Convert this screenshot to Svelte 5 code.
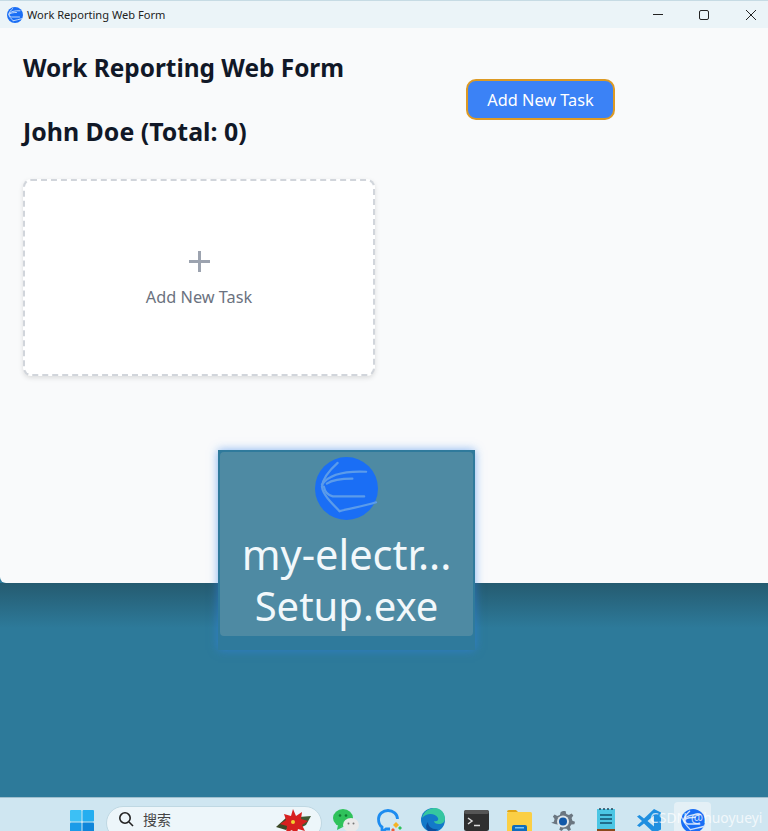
<script>
	let tasks = $state([]);
	const owner = "John Doe";
</script>

{#snippet appLogo(size, line = "#5b9bea")}
	<svg width={size} height={size} viewBox="0 0 64 64">
		<circle cx="32" cy="32" r="32" fill="#1a6ef5" />
		<g fill="none" stroke={line} stroke-width={size < 30 ? 3.6 : 2.2} stroke-linecap="round">
			<path d="M23 6C14 14 8 22 7 30 8 38 16 46 25 55" />
			<path d="M7 28C14 18 30 14 52 15" />
			<path d="M12 27C18 23 28 22 38 22" />
			<path d="M9 30C10 36 14 39 18 40L50 40" />
			<path d="M25 55C36 52 50 50 62 46" />
		</g>
	</svg>
{/snippet}

<div class="desktop">
	<section class="window">
		<header class="titlebar">
			<div class="title">
				{@render appLogo(16, "#cfe2fb")}
				<span>Work Reporting Web Form</span>
			</div>
			<div class="controls">
				<svg width="46" height="28" viewBox="0 0 46 28"><path d="M17 13.5h10" stroke="#222" fill="none" /></svg>
				<svg width="46" height="28" viewBox="0 0 46 28"><rect x="17.5" y="9.5" width="9" height="9" rx="1.5" stroke="#222" fill="none" /></svg>
				<svg width="46" height="28" viewBox="0 0 46 28"><path d="M18 9l10 10M28 9l-10 10" stroke="#222" fill="none" /></svg>
			</div>
		</header>
		<main class="content">
			<div class="head">
				<h1>Work Reporting Web Form</h1>
				<button class="add-btn">Add New Task</button>
			</div>
			<h2>{owner} (Total: {tasks.length})</h2>
			<div class="card">
				<span class="plus"></span>
				<span class="card-label">Add New Task</span>
			</div>
		</main>
	</section>

	<div class="wallpaper"></div>

	<footer class="taskbar">
		<svg class="tb win" width="24" height="24" viewBox="0 0 24 24">
			<rect x="0" y="0" width="11.5" height="11.5" rx="1" fill="#3cc0f5" />
			<rect x="12.5" y="0" width="11.5" height="11.5" rx="1" fill="#25aef0" />
			<rect x="0" y="12.5" width="11.5" height="11.5" rx="1" fill="#1a9be8" />
			<rect x="12.5" y="12.5" width="11.5" height="11.5" rx="1" fill="#0f86da" />
		</svg>
		<div class="search">
			<svg width="16" height="16" viewBox="0 0 16 16" fill="none" stroke="#222" stroke-width="1.6"><circle cx="7" cy="7" r="5.2" /><path d="M11 11l4 4" /></svg>
			<span>搜索</span>
			<svg class="flower" width="36" height="30" viewBox="0 0 36 30">
				<path d="M0 19L11 9l6 7-7 6z" fill="#3c4a26" />
				<path d="M35 8L23 9l1 11 6-3z" fill="#3e5a34" />
				<path d="M17 1l3 7 6-4-1 7 7 2-6 4 3 6-7-2-2 7-4-6-6 3 1-7-7-2 6-4-2-6 7 2z" fill="#d7201f" />
				<circle cx="17" cy="14" r="2" fill="#f2cf30" />
			</svg>
		</div>
		<svg class="tb" width="26" height="24" viewBox="0 0 26 24">
			<ellipse cx="10" cy="10" rx="10" ry="9" fill="#2fc25b" />
			<path d="M5 17l-1 5 6-3z" fill="#2fc25b" />
			<ellipse cx="18" cy="17" rx="8" ry="7" fill="#e9e9e9" />
			<circle cx="15.500" cy="15.500" r="1" fill="#777" /><circle cx="20.500" cy="15.500" r="1" fill="#777" />
			<circle cx="7" cy="7.500" r="1.300" fill="#0f7a32" /><circle cx="13" cy="7.500" r="1.300" fill="#0f7a32" />
		</svg>
		<svg class="tb" width="26" height="26" viewBox="0 0 26 26" fill="none">
			<path d="M13 21H9l-4 3v-5C2 17 1.500 14 1.500 11 1.500 6 6 2.500 11 2.500S20.500 6 20.500 11" stroke="#1d8cf0" stroke-width="2.800" />
			<path d="M19 14l3 3-3 3-3-3z" fill="#f5b324" /><path d="M23 18l2 2-2 2-2-2z" fill="#2fc25b" /><path d="M16 20l2 2-2 2-2-2z" fill="#ee5a3c" />
		</svg>
		<svg class="tb" width="24" height="24" viewBox="0 0 24 24">
			<circle cx="12" cy="12" r="12" fill="#1379c9" />
			<path d="M1 10C3 2 10 0 14 0c6 0 10 5 10 11 0 3-3 5-6 5-3 0-5-1-5-3 3 1 5-1 4-3C15 6 9 5 5 7 3 8 2 9 1 10z" fill="#35c6a0" />
			<path d="M7 14c0 5 5 8 10 7-1 1-3 3-6 3-5 0-8-5-4-10z" fill="#0c4f9e" />
		</svg>
		<svg class="tb" width="25" height="21" viewBox="0 0 25 21">
			<rect width="25" height="21" rx="2.500" fill="#2f2f2f" />
			<rect width="25" height="4" rx="2" fill="#555" />
			<path d="M4 8l4 3-4 3" stroke="#ddd" stroke-width="1.500" fill="none" />
			<path d="M10 15.500h6" stroke="#ddd" stroke-width="1.500" />
		</svg>
		<svg class="tb folder" width="25" height="26" viewBox="0 0 25 26">
			<path d="M0 3a2 2 0 0 1 2-2h7l2 2h-11z" fill="#e0a414" />
			<rect y="3" width="25" height="23" rx="1.500" fill="#fbcf45" />
			<rect x="5" y="16" width="15" height="10" rx="2" fill="#0f6cbd" />
			<rect x="8" y="18" width="9" height="1.500" fill="#7cc4f5" />
		</svg>
		<svg class="tb" width="24" height="24" viewBox="0 0 24 24">
			<path d="M12 2l2.500 0 .8 3 2.600 1 2.700-1.500 1.700 2-1.700 2.600.8 2.600 2.600 1-.6 2.600-3 .2-1.500 2.300 1 2.900-2.300 1.300-2.100-2.200-2.800 0-2.100 2.200-2.300-1.300 1-2.900-1.500-2.300-3-.2L.2 13.700l2.600-1 .8-2.600L1.900 7.500l1.700-2L6.300 7l2.600-1 .8-3z" fill="#6b7680" />
			<circle cx="12" cy="12.500" r="6" fill="#dfe6ea" />
			<circle cx="12" cy="12.500" r="4" fill="#1158a8" />
		</svg>
		<svg class="tb" width="18" height="25" viewBox="0 0 18 25">
			<rect y="1" width="18" height="20" fill="#4cc6e4" />
			<rect y="21" width="18" height="4" fill="#8a4a1c" />
			<path d="M3 0v2M7 0v2M11 0v2M15 0v2" stroke="#25475c" stroke-width="1.500" />
			<path d="M3 7h12M3 11h12M3 15h12" stroke="#12506e" stroke-width="1.300" />
		</svg>
		<svg class="tb" width="24" height="24" viewBox="0 0 24 24">
			<path d="M17 0l7 3.500v17L17 24 7 14.500 2.500 18 0 16.500 5 12 0 7.500 2.500 6 7 9.500z M17 6.500L10.500 12 17 17.500z" fill="#1f8fe0" fill-rule="evenodd" />
		</svg>
		<div class="active">{@render appLogo(24, "#cfe2fb")}</div>
	</footer>

	<!-- dragged file ghost, floats over window and wallpaper -->
	<div class="ghost">
		<div class="ghost-inner">
			{@render appLogo(63)}
			<span class="name">my-electr...</span>
			<span>Setup.exe</span>
		</div>
	</div>

	<div class="watermark">CSDN @huoyueyi</div>
</div>

<style>
	:global(body) {
		font-family: "Noto Sans", "Noto Sans CJK SC", sans-serif;
	}
	.desktop {
		position: relative;
		width: 768px;
		height: 831px;
		display: flex;
		flex-direction: column;
		overflow: hidden;
		background: #2d7a9a;
	}
	.window {
		height: 583px;
		display: flex;
		flex-direction: column;
		flex: none;
		background: #f9fafb;
		border-radius: 0 0 0 6px;
		overflow: hidden;
	}
	.titlebar {
		height: 28px;
		flex: none;
		display: flex;
		justify-content: space-between;
		align-items: center;
		background: #ebf4f8;
		border-top: 1px solid #c6dbe4;
		box-sizing: border-box;
	}
	.title {
		display: flex;
		align-items: center;
		gap: 4px;
		padding-left: 7px;
		font-size: 11.1px;
		color: #222;
	}
	.controls {
		display: flex;
		margin-right: -6px;
	}
	.content {
		padding: 24px 23px;
	}
	.head {
		display: flex;
		align-items: flex-start;
	}
	h1, h2 {
		margin: 0;
		line-height: 32px;
		font-weight: 700;
		color: #111827;
	}
	h1 {
		width: 443px;
		flex: none;
		font-size: 24.4px;
	}
	h2 {
		margin-top: -5px;
		font-size: 24.9px;
	}
	.add-btn {
		margin-top: 27px;
		width: 149px;
		height: 41px;
		box-sizing: border-box;
		background: #3b82f6;
		border: 2px solid #dd9a24;
		border-radius: 10px;
		color: #fff;
		font: inherit;
		font-size: 16.3px;
	}
	.card {
		margin-top: 32px;
		width: 352px;
		height: 197px;
		box-sizing: border-box;
		padding-top: 2px;
		background: #fff;
		border: 2px dashed #d1d5db;
		border-radius: 8px;
		box-shadow: 0 2px 5px rgba(0, 0, 0, 0.12);
		display: flex;
		flex-direction: column;
		align-items: center;
		justify-content: center;
		gap: 15px;
	}
	.plus {
		width: 21px;
		height: 21px;
		background:
			linear-gradient(#9ca3af, #9ca3af) center / 21px 3px no-repeat,
			linear-gradient(#9ca3af, #9ca3af) center / 3px 21px no-repeat;
	}
	.card-label {
		font-size: 16.3px;
		line-height: 20px;
		color: #6b7280;
	}
	.wallpaper {
		height: 214px;
		flex: none;
		background: linear-gradient(#255b70, #2d7a9a 45px);
	}
	.taskbar {
		flex: 1;
		display: flex;
		align-items: flex-start;
		background: #cfe6f1;
		border-top: 1px solid #9fbfce;
		position: relative;
	}
	.tb {
		position: absolute;
		top: 10px;
	}
	.taskbar > :nth-child(1) { left: 70px; top: 12px; }
	.taskbar > :nth-child(3) { left: 333px; top: 10px; }
	.taskbar > :nth-child(4) { left: 377px; top: 10px; }
	.taskbar > :nth-child(5) { left: 421px; top: 10px; }
	.taskbar > :nth-child(6) { left: 464px; top: 12px; }
	.taskbar > :nth-child(7) { left: 507px; top: 11px; }
	.taskbar > :nth-child(8) { left: 551px; top: 11px; }
	.taskbar > :nth-child(9) { left: 597px; top: 10px; }
	.taskbar > :nth-child(10) { left: 637px; top: 11px; }
	.search {
		position: absolute;
		left: 106px;
		top: 8px;
		width: 216px;
		height: 34px;
		box-sizing: border-box;
		padding: 0 0 8px 11px;
		display: flex;
		align-items: center;
		gap: 9px;
		background: #edf6fa;
		border: 1px solid #bfd8e3;
		border-radius: 17px;
		font-size: 14px;
		color: #444;
	}
	.flower {
		position: absolute;
		left: 169px;
		top: 1px;
	}
	.active {
		position: absolute;
		left: 674px;
		top: 4px;
		width: 37px;
		height: 40px;
		display: flex;
		justify-content: center;
		padding-top: 7px;
		box-sizing: border-box;
		background: #e4f0f6;
		border-radius: 4px;
	}
	.ghost {
		position: absolute;
		left: 218px;
		top: 450px;
		width: 257px;
		height: 200px;
		box-sizing: border-box;
		padding: 2px;
		background: #2f7a9c;
		box-shadow: 0 0 9px rgba(50, 130, 235, 0.6);
	}
	.ghost-inner {
		height: 184px;
		box-sizing: border-box;
		padding-top: 5px;
		display: flex;
		flex-direction: column;
		align-items: center;
		background: #4e8aa3;
		border-radius: 4px;
		color: #f2f8fb;
		font-size: 40px;
		line-height: 52px;
	}
	.name {
		margin-top: 8px;
		font-size: 41.5px;
	}
	.watermark {
		position: absolute;
		left: 650px;
		top: 808px;
		font-size: 13.9px;
		color: rgba(255, 255, 255, 0.72);
		white-space: nowrap;
	}
</style>
